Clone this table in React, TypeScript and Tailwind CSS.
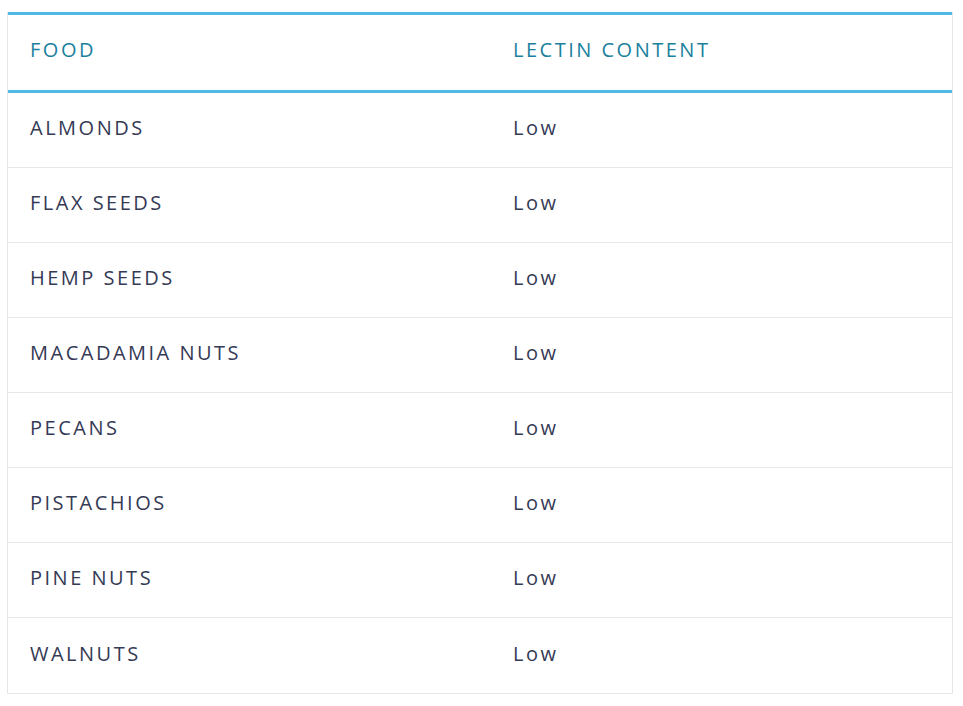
const ROWS = [
  "ALMONDS",
  "FLAX SEEDS",
  "HEMP SEEDS",
  "MACADAMIA NUTS",
  "PECANS",
  "PISTACHIOS",
  "PINE NUTS",
  "WALNUTS",
];

export default function App() {
  return (
    <div className="min-h-[706px] bg-white pt-3 pl-[7px] font-['Open_Sans',sans-serif] text-[20px] tracking-[2.5px]">
      <div className="w-[946px] border-x border-b border-[#e6e6e6]">
        <div className="flex h-[81px] items-center border-y-[3px] border-[#4eb9e4] pb-[5px] text-[#1b7f9d]">
          <div className="w-[483px] pl-[22px]">FOOD</div>
          <div className="flex-1 pl-[22px]">LECTIN CONTENT</div>
        </div>
        {ROWS.map((food, i) => (
          <div
            key={food}
            className={`flex h-[75px] items-center pb-[4px] text-[#353a55] ${
              i < ROWS.length - 1 ? "border-b border-[#e8e8e8]" : ""
            }`}
          >
            <div className="w-[483px] pl-[22px]">{food}</div>
            <div className="flex-1 pl-[22px]">Low</div>
          </div>
        ))}
      </div>
    </div>
  );
}
